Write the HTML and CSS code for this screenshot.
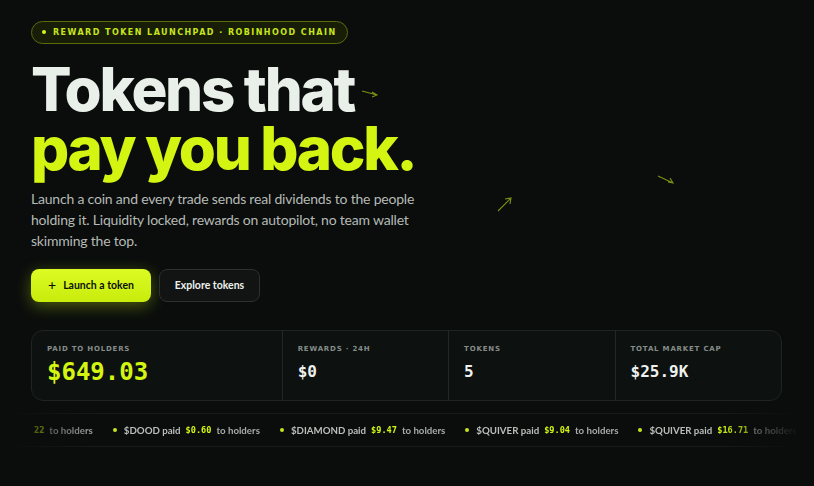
FILE: index.html
```html
<!DOCTYPE html>
<html lang="en">
<head>
<meta charset="utf-8">
<title>Reward Token Launchpad</title>
<link rel="stylesheet" href="styles.css">
</head>
<body>
<main class="hero">
  <svg class="spark spark-a" width="18" height="10" viewBox="0 0 18 10"><path d="M1 2 L16 6 M11 3 L16 6 L11 8" /></svg>
  <svg class="spark spark-b" width="16" height="16" viewBox="0 0 16 16"><path d="M1 15 L14 2 M8 3 L14 2 L13 8" /></svg>
  <svg class="spark spark-c" width="18" height="10" viewBox="0 0 18 10"><path d="M1 1 L16 8 M11 7 L16 8 L13 3" /></svg>

  <div class="badge"><span class="badge-dot"></span>Reward token launchpad · Robinhood chain</div>

  <h1 class="title">
    <span class="title-line">Tokens that</span>
    <span class="title-line accent">pay you back.</span>
  </h1>

  <p class="lede">Launch a coin and every trade sends real dividends to the people holding it. Liquidity locked, rewards on autopilot, no team wallet skimming the top.</p>

  <div class="actions">
    <button class="btn btn-primary"><span class="plus">+</span>Launch a token</button>
    <button class="btn btn-ghost">Explore tokens</button>
  </div>

  <section class="stats">
    <div class="stat">
      <div class="stat-label">Paid to holders</div>
      <div class="stat-value big">$649.03</div>
    </div>
    <div class="stat">
      <div class="stat-label">Rewards · 24h</div>
      <div class="stat-value">$0</div>
    </div>
    <div class="stat">
      <div class="stat-label">Tokens</div>
      <div class="stat-value">5</div>
    </div>
    <div class="stat">
      <div class="stat-label">Total market cap</div>
      <div class="stat-value">$25.9K</div>
    </div>
  </section>

  <div class="ticker">
    <div class="ticker-track">
      <span class="tick"><span class="amt">22</span><span class="rest">to holders</span></span>
      <span class="tick"><span class="dot"></span><span class="name">$DOOD paid</span><span class="amt">$0.60</span><span class="rest">to holders</span></span>
      <span class="tick"><span class="dot"></span><span class="name">$DIAMOND paid</span><span class="amt">$9.47</span><span class="rest">to holders</span></span>
      <span class="tick"><span class="dot"></span><span class="name">$QUIVER paid</span><span class="amt">$9.04</span><span class="rest">to holders</span></span>
      <span class="tick"><span class="dot"></span><span class="name">$QUIVER paid</span><span class="amt">$16.71</span><span class="rest">to holders</span></span>
    </div>
  </div>
</main>
</body>
</html>
```
FILE: styles.css
```css
* { box-sizing: border-box; }

html, body {
  margin: 0;
  background: #0a0d0c;
  height: 100%;
}

body {
  font-family: "Lato", sans-serif;
  color: #e8ede9;
  overflow: hidden;
}

.hero {
  position: relative;
  padding: 18px 32px 0 31px;
}

.spark {
  position: absolute;
  fill: none;
  stroke: #a4bd12;
  stroke-width: 1.1;
  opacity: 0.75;
}
.spark-a { left: 361px; top: 89px; }
.spark-b { left: 497px; top: 196px; }
.spark-c { left: 657px; top: 175px; }

.badge {
  display: inline-flex;
  align-items: center;
  gap: 7px;
  height: 23px;
  padding: 0 10px 0 10px;
  border: 1px solid #5b6c0c;
  border-radius: 12px;
  background: #171d07;
  color: #c8e41c;
  font-family: "DejaVu Sans", sans-serif;
  font-weight: 700;
  font-size: 8px;
  letter-spacing: 1.45px;
  text-transform: uppercase;
}
.badge-dot {
  width: 4px;
  height: 4px;
  border-radius: 50%;
  background: #d4f51a;
}

.title {
  margin: 16px 0 0;
  font-family: "Inter", sans-serif;
  font-weight: 800;
  font-size: 60px;
  line-height: 59px;
  letter-spacing: -2.3px;
}
.title-line { display: block; color: #e9efe9; }
.title-line.accent { color: #d4f511; }

.lede {
  margin: 10px 0 0;
  width: 392px;
  font-size: 14px;
  letter-spacing: -0.2px;
  line-height: 21px;
  color: #b5bab6;
}

.actions {
  display: flex;
  gap: 8px;
  margin-top: 18px;
}
.btn {
  height: 33px;
  border-radius: 8px;
  font-family: "Lato", sans-serif;
  font-weight: 700;
  font-size: 10.5px;
  cursor: pointer;
}
.btn-primary {
  display: inline-flex;
  align-items: center;
  gap: 7px;
  width: 120px;
  justify-content: center;
  border: none;
  color: #0c0f05;
  background: linear-gradient(180deg, #dcfb24, #c8ec0c);
  box-shadow: 0 4px 16px rgba(200, 240, 20, 0.35);
}
.plus { font-size: 14px; font-weight: 500; line-height: 1; }
.btn-ghost {
  width: 101px;
  border: 1px solid #2c302f;
  background: #111413;
  color: #eef1ee;
}

.stats {
  display: grid;
  grid-template-columns: 1.5fr 1fr 1fr 1fr;
  margin-top: 28px;
  width: 751px;
  height: 71px;
  border: 1px solid #1f2322;
  border-radius: 12px;
  background: #0d1110;
}
.stat {
  padding: 14px 15px 0;
  border-left: 1px solid #232827;
}
.stat:first-child { border-left: none; }
.stat-label {
  font-family: "DejaVu Sans", sans-serif;
  font-weight: 700;
  font-size: 7px;
  letter-spacing: 0.8px;
  text-transform: uppercase;
  color: #858c88;
}
.stat-value {
  margin-top: 9px;
  font-family: "DejaVu Sans Mono", monospace;
  font-weight: 700;
  font-size: 16px;
  color: #eef1ee;
}
.stat-value.big {
  margin-top: 5px;
  font-size: 24px;
  color: #d4f511;
}

.ticker {
  margin: 12px -32px 0 -31px;
  height: 34px;
  border-top: 1px solid #171b1a;
  border-bottom: 1px solid #171b1a;
  overflow: hidden;
  -webkit-mask-image: linear-gradient(90deg, transparent 0, #000 100px, #000 720px, transparent 800px);
          mask-image: linear-gradient(90deg, transparent 0, #000 100px, #000 720px, transparent 800px);
}
.ticker-track {
  display: flex;
  align-items: center;
  height: 100%;
  gap: 20px;
  padding-left: 34px;
  white-space: nowrap;
  font-family: "Lato", sans-serif;
  font-weight: 700;
  font-size: 9.7px;
  color: #a9aeab;
}
.tick { display: inline-flex; align-items: center; gap: 5px; }
.dot {
  width: 4px;
  height: 4px;
  border-radius: 50%;
  background: #c8e41c;
  margin-right: 2px;
}
.name { color: #b9beba; }
.amt {
  font-family: "DejaVu Sans Mono", monospace;
  font-weight: 700;
  font-size: 8.6px;
  color: #d4f511;
}
.rest { color: #a6aba8; }
```
